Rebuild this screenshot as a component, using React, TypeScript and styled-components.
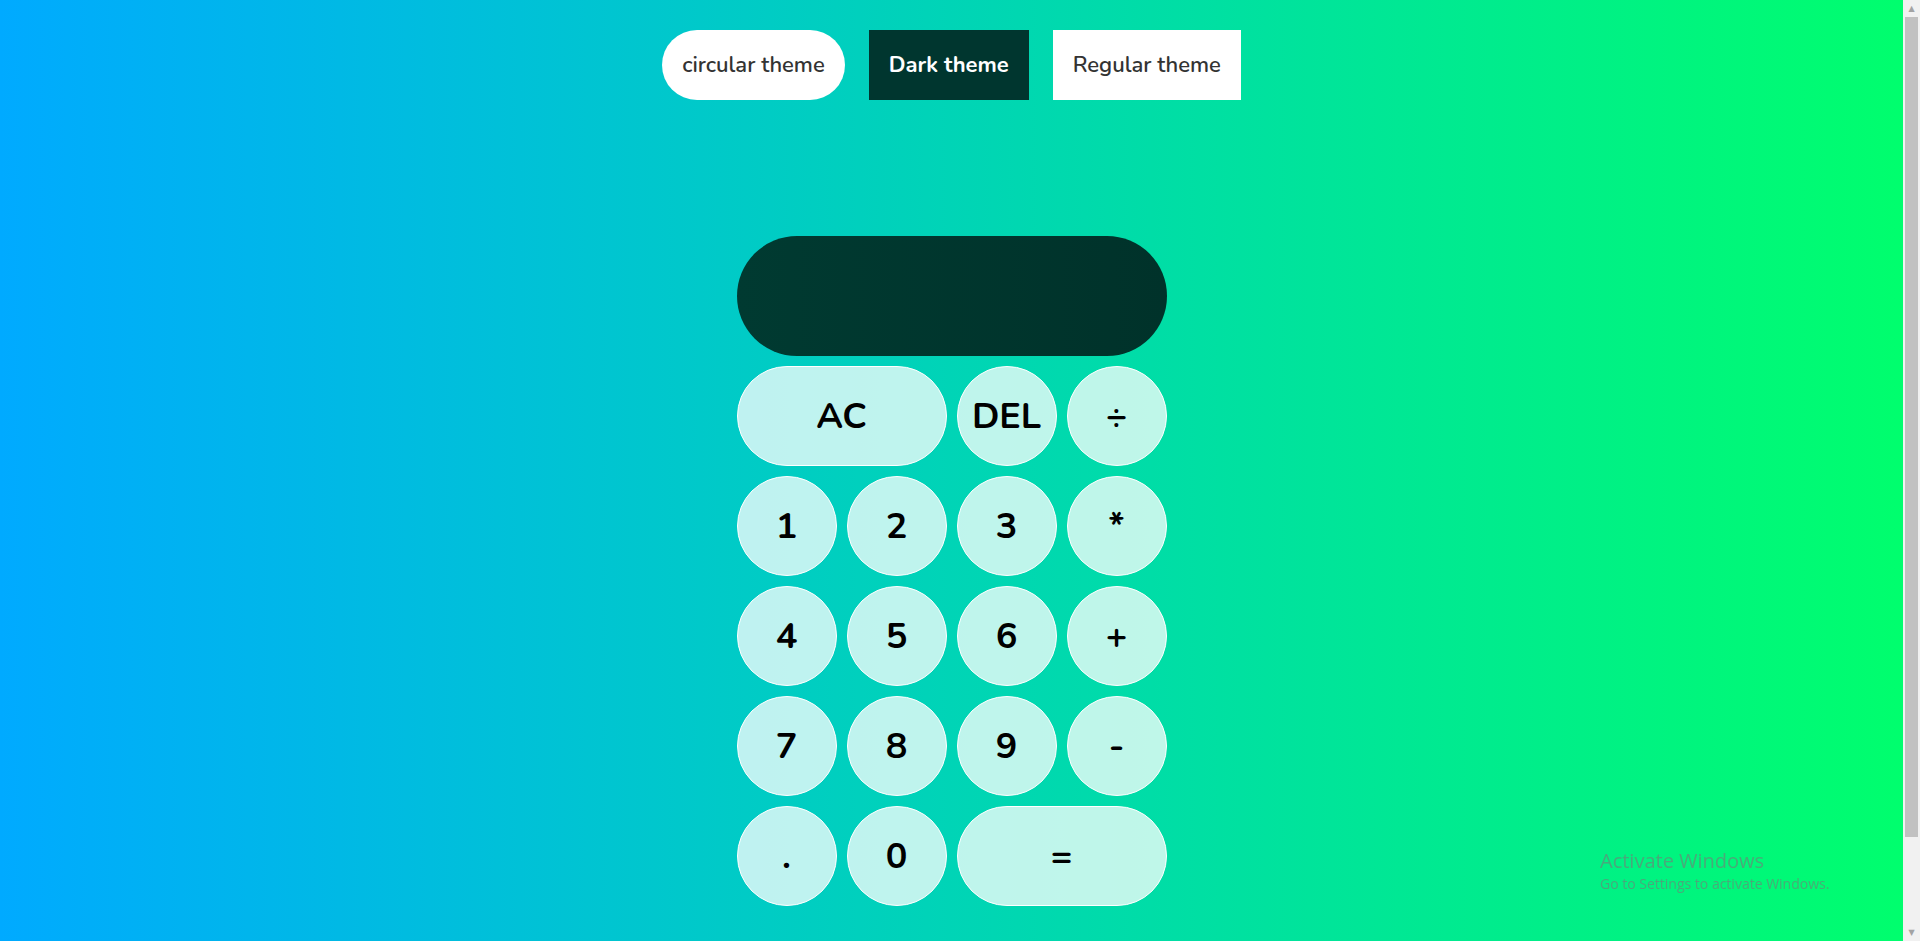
import React from 'react'
import styled, { createGlobalStyle } from 'styled-components'

const GlobalStyle = createGlobalStyle`
  * {
    box-sizing: border-box;
  }
  body {
    margin: 0;
    font-family: 'Nunito', Lato, 'Open Sans', sans-serif;
    background: linear-gradient(to right, #00aaff, #00ff6c);
    min-height: 1040px;
  }
`

const KEYS: { label: string; wide?: boolean }[] = [
  { label: 'AC', wide: true },
  { label: 'DEL' },
  { label: '÷' },
  { label: '1' },
  { label: '2' },
  { label: '3' },
  { label: '*' },
  { label: '4' },
  { label: '5' },
  { label: '6' },
  { label: '+' },
  { label: '7' },
  { label: '8' },
  { label: '9' },
  { label: '-' },
  { label: '.' },
  { label: '0' },
  { label: '=', wide: true },
]

export default function App() {
  return (
    <Page>
      <GlobalStyle />
      <ThemeBar>
        <ThemeButton variant="circular">circular theme</ThemeButton>
        <ThemeButton variant="dark">Dark theme</ThemeButton>
        <ThemeButton variant="regular">Regular theme</ThemeButton>
      </ThemeBar>
      <Calculator>
        <Display />
        {KEYS.map((k) => (
          <Key key={k.label} wide={k.wide}>
            {k.label}
          </Key>
        ))}
      </Calculator>
      <Watermark>
        <WatermarkTitle>Activate Windows</WatermarkTitle>
        <WatermarkText>Go to Settings to activate Windows.</WatermarkText>
      </Watermark>
      <ScrollTrack>
        <ScrollArrow>▲</ScrollArrow>
        <ScrollThumb />
        <ScrollSpacer />
        <ScrollArrow>▼</ScrollArrow>
      </ScrollTrack>
    </Page>
  )
}

const Page = styled.div`
  display: flex;
  flex-direction: column;
  align-items: center;
  padding-top: 30px;
  padding-right: 17px;
`

const ThemeBar = styled.div`
  display: flex;
  gap: 24px;
`

const ThemeButton = styled.button<{ variant: 'circular' | 'dark' | 'regular' }>`
  height: 70px;
  padding: 0 20px;
  border: none;
  font-family: inherit;
  font-size: 22px;
  cursor: pointer;
  border-radius: ${(p) => (p.variant === 'circular' ? '35px' : '0')};
  background: ${(p) => (p.variant === 'dark' ? '#00362f' : '#ffffff')};
  color: ${(p) => (p.variant === 'dark' ? '#ffffff' : '#333333')};
  font-weight: ${(p) => (p.variant === 'dark' ? 700 : 600)};
`

const Calculator = styled.div`
  display: grid;
  grid-template-columns: repeat(4, 100px);
  grid-template-rows: 120px repeat(5, 100px);
  gap: 10px;
  margin-top: 136px;
`

const Display = styled.div`
  grid-column: 1 / -1;
  border-radius: 60px;
  background: linear-gradient(to right, #003a31, #00322a);
`

const Key = styled.button<{ wide?: boolean }>`
  grid-column: ${(p) => (p.wide ? 'span 2' : 'auto')};
  border: 1px solid #ffffff;
  border-radius: 50px;
  background: rgba(255, 255, 255, 0.75);
  font-family: inherit;
  font-size: 36px;
  font-weight: 700;
  color: #000000;
  cursor: pointer;
  padding: 0;
`

const Watermark = styled.div`
  position: fixed;
  left: 1600px;
  top: 848px;
  color: rgba(120, 120, 120, 0.6);
  font-family: 'Open Sans', sans-serif;
  pointer-events: none;
`

const WatermarkTitle = styled.div`
  font-size: 20px;
  line-height: 26px;
`

const WatermarkText = styled.div`
  font-size: 14px;
  line-height: 20px;
`

const ScrollTrack = styled.div`
  position: fixed;
  top: 0;
  right: 0;
  width: 17px;
  height: 100vh;
  background: #f1f1f1;
  display: flex;
  flex-direction: column;
  align-items: center;
`

const ScrollArrow = styled.div`
  height: 17px;
  display: flex;
  align-items: center;
  justify-content: center;
  font-size: 8px;
  color: #a3a3a3;
  font-family: 'DejaVu Sans', sans-serif;
`

const ScrollThumb = styled.div`
  width: 13px;
  height: 820px;
  background: #c1c1c1;
`

const ScrollSpacer = styled.div`
  flex: 1;
`
